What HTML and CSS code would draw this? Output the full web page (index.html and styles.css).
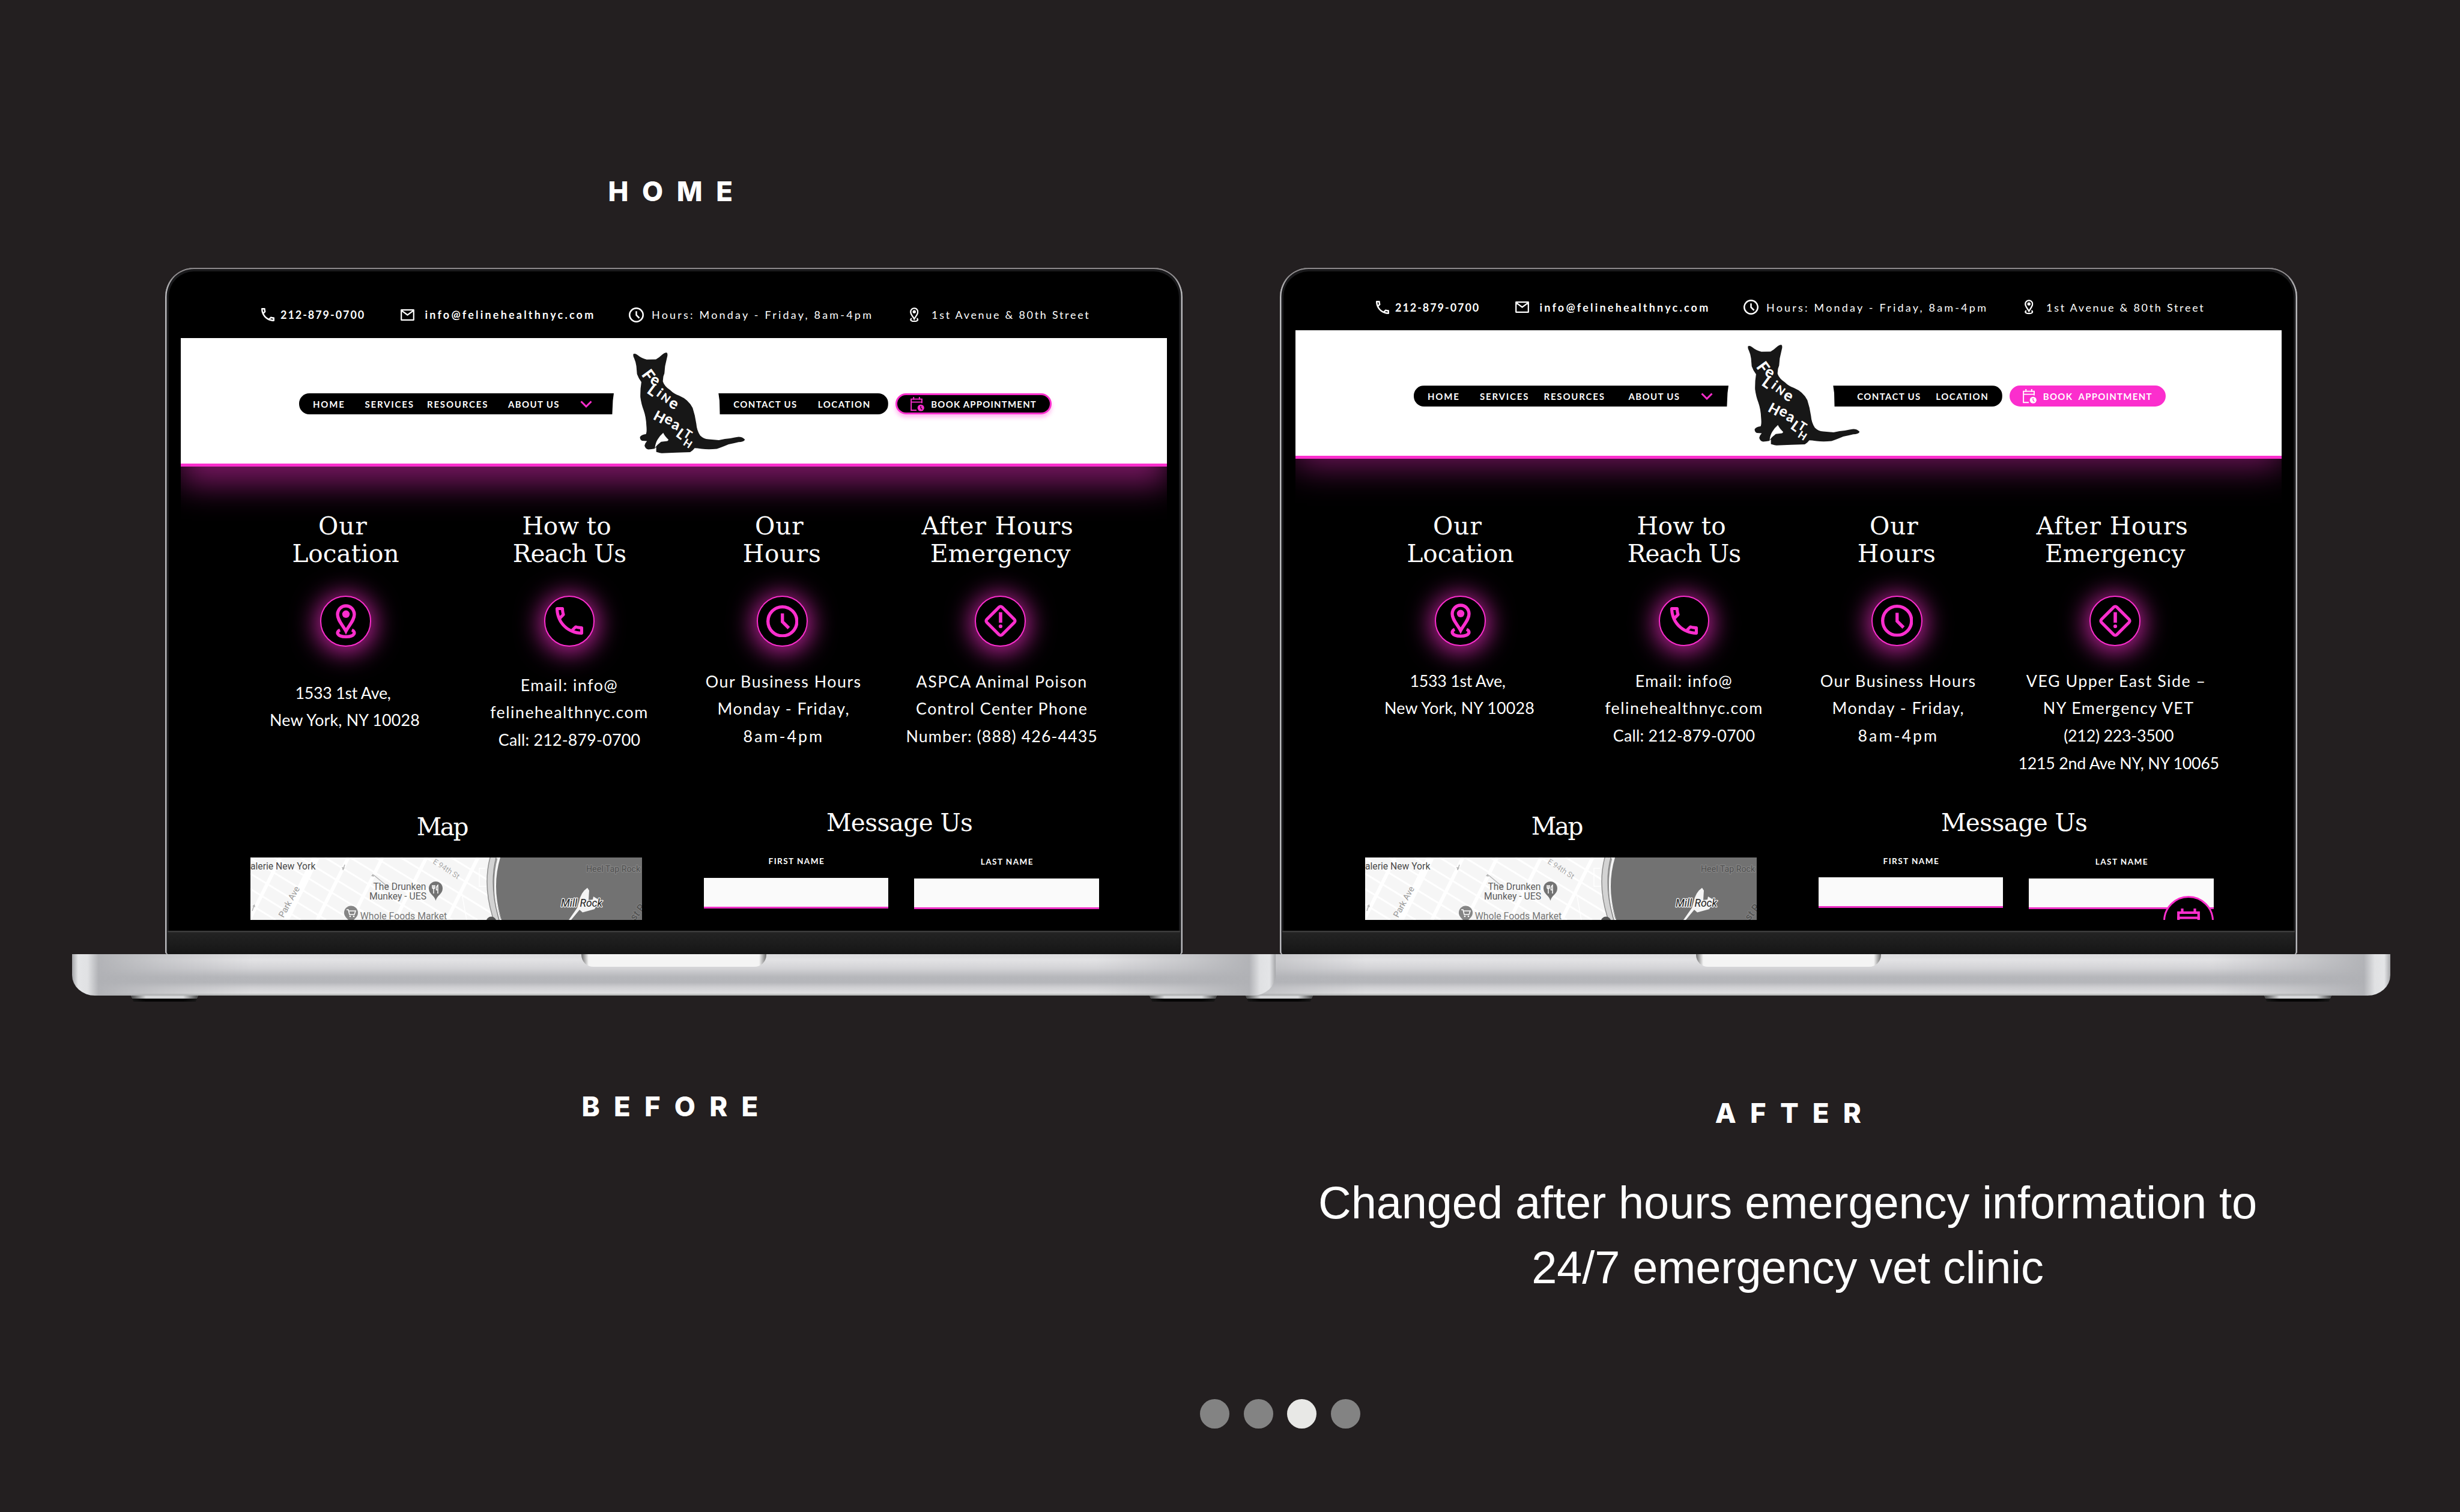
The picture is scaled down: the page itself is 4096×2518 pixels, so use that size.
FILE: index.html
```html
<!DOCTYPE html>
<html lang="en">
<head>
<meta charset="utf-8">
<title>Home – before and after</title>
<link rel="stylesheet" href="styles.css">
</head>
<body>
<svg class="sprite" aria-hidden="true">
  <defs>
  <symbol id="phone" viewBox="3 3 18 18"><path d="M6.54 5c.06.89.21 1.76.45 2.59l-1.2 1.2c-.41-1.2-.67-2.47-.76-3.79h1.51m9.86 12.02c.85.24 1.72.39 2.6.45v1.49c-1.32-.09-2.59-.35-3.8-.75l1.2-1.19M7.5 3H4c-.55 0-1 .45-1 1 0 9.39 7.61 17 17 17 .55 0 1-.45 1-1v-3.49c0-.55-.45-1-1-1-1.24 0-2.45-.2-3.57-.57-.1-.04-.21-.05-.31-.05-.26 0-.51.1-.71.29l-2.2 2.2c-2.83-1.45-5.15-3.76-6.59-6.59l2.2-2.2c.28-.28.36-.67.25-1.02C8.7 6.45 8.5 5.25 8.5 4c0-.55-.45-1-1-1z"/></symbol>
  <symbol id="mail" viewBox="0 0 23 19"><path fill="none" stroke="currentColor" stroke-width="2.2" stroke-linejoin="round" d="M1.2 1.2h20.6v16.6H1.2zM1.5 2.2l10 7.3 10-7.3"/></symbol>
  <symbol id="clock" viewBox="2 2 20 20"><g fill="none" stroke="currentColor" stroke-width="2"><circle cx="12" cy="12" r="9"/><path d="M12 7v5.2l4 4"/></g></symbol>
  <symbol id="pin" viewBox="0 0 34 58"><g fill="none" stroke="currentColor" stroke-width="5.4"><path d="M17 45.5C11.500 35 2.900 27.500 2.900 17.500A14.100 14.500 0 0 1 31.100 17.500C31.100 27.500 22.500 35 17 45.500Z"/><path d="M7 43.500C0 46.500 1.500 54.800 17 54.800S34 46.500 27 43.500"/></g><circle cx="17" cy="17" r="6.3"/></symbol>
  <symbol id="alert" viewBox="0 0 58 58"><rect x="11" y="11" width="36" height="36" rx="3.500" transform="rotate(45 29 29)" fill="none" stroke="currentColor" stroke-width="5.200"/><path d="M26.200 14.500h5.600v17.500h-5.600z"/><circle cx="29" cy="38" r="3.100"/></symbol>
  <symbol id="chevron" viewBox="0 0 20 12"><path d="M1.500 1.500 10 10l8.500-8.500" fill="none" stroke="currentColor" stroke-width="3"/></symbol>
  <symbol id="calendar" viewBox="0 0 24 25"><path d="M5.500 0v5M15.500 0v5M1.200 9h18.600M10.500 23.200H1.200V3.800h18.600V11" fill="none" stroke="currentColor" stroke-width="2"/><circle cx="18" cy="19" r="5.800"/><path class="hand" d="M17.800 15.600v3.600l2.400 2.400" fill="none" stroke-width="1.300"/></symbol>
  <symbol id="cat" viewBox="68 83 670 604"><path fill="#171717" fill-rule="evenodd" d="M70 92Q80 86 94 97Q120 118 150 125L205 124Q225 113 240 98Q258 82 270 84Q278 90 272 112L260 165L256 208Q246 228 247 257Q256 285 290 308Q315 333 345 342Q400 365 425 415Q440 460 447 510Q450 550 470 580Q490 600 520 603L582 608Q620 598 650 597Q680 590 700 588Q725 588 738 605Q732 618 700 620Q670 628 640 633Q600 650 570 660Q520 665 480 660Q450 656 437 656Q425 672 410 680Q330 683 240 686Q215 682 207 678L207 650Q203 652 196 659Q180 662 160 664Q140 658 137 640Q140 625 152 613L122 612Q108 604 110 588Q120 575 145 572Q152 560 148 520Q146 470 132 430Q118 395 112 350Q111 300 118 260Q100 235 92 212L88 165Q85 140 75 118Q67 105 70 92ZM249 564Q256 582 281 606L274 613L236 618Q214 634 199 655Q202 625 215 604Q230 580 249 564Z"/></symbol>
  <symbol id="mapart" viewBox="0 0 652.600 104">
    <rect width="652.600" height="104" fill="#f6f6f6"/>
    <g stroke="#fff" fill="none">
      <path stroke-width="3" d="M-170 0l170 104M-128 0l170 104M-86 0l170 104M-44 0l170 104M-2 0l170 104M40 0l170 104M82 0l170 104M124 0l170 104M166 0l170 104M208 0l170 104M250 0l170 104M292 0l170 104M334 0l170 104"/>
      <path stroke-width="6" d="M50 0L-2 104M163 0l-52 104M220 0l-52 104M293 0l-52 104M379 0l-52 104"/>
      <path stroke-width="12" d="M109 0L58 104"/>
      <path stroke-width="1.500" d="M391 18h-10v30h12M352 60l8 44"/>
    </g>
    <path d="M205 29l24 20M157 12l-3 9M6 80l-3 9" stroke="#b5b5b5" stroke-width="1.500" fill="none"/>
    <path d="M154 21l-2-5 5 1zM204 27l-3 4 5 1zM7 78l-4 3 5 2z" fill="#b5b5b5"/>
    <path d="M416 0Q401 50 418 104H652.600V0Z" fill="#727272"/>
    <path d="M405 0Q392 48 411 104" fill="none" stroke="#8f8f8f" stroke-width="13"/>
    <path d="M405 0Q392 48 411 104" fill="none" stroke="#d3d3d3" stroke-width="10"/>
    <path d="M414 0Q399 50 416 104" fill="none" stroke="#f4f4f4" stroke-width="2"/>
    <path d="M409 0Q397 48 414 104" fill="none" stroke="#777" stroke-width="1.200"/>
    <circle cx="401" cy="107" r="8.500" fill="#555"/>
    <path d="M561 50.500Q550 58 547 74L544 84 530 104h4l14-17 5 4.500 20-5.500 8-15-10-6-1 5-7 1 1-16z" fill="#f4f4f4"/>
    <path d="M308.500 72c-2-9-11.500-11-11.500-20.500a11.500 11.500 0 0 1 23 0c0 9.500-9.500 11.500-11.500 20.500z" fill="#737373"/>
    <path d="M303 46v4q0 2 2 2v8M307 46v4q0 2-2 2M305 46v6M312 60V46q-3 2-2.500 8H312" fill="none" stroke="#fff" stroke-width="1.500"/>
    <path d="M167.500 112c-2-9-11.500-11-11.500-20a11.500 11.500 0 0 1 23 0c0 9-9.500 11-11.500 20z" fill="#868686"/>
    <path d="M160 87h3l2 8h8l2-6h-11" fill="none" stroke="#fff" stroke-width="1.600"/><circle cx="166" cy="98" r="1.300" fill="#fff"/><circle cx="172" cy="98" r="1.300" fill="#fff"/>
  </symbol>
  </defs>
</svg>

<main class="slide">
  <h1 class="tag tag-top">HOME</h1>

  <div class="stage">
    <section class="laptop before">
      <div class="lid">
        <div class="screen">
          <div class="topbar">
            <svg class="i-phone"><use href="#phone"/></svg><b class="t-phone">212-879-0700</b>
            <svg class="i-mail"><use href="#mail"/></svg><b class="t-mail">info@felinehealthnyc.com</b>
            <svg class="i-clock"><use href="#clock"/></svg><span class="t-hours">Hours: Monday - Friday, 8am-4pm</span>
            <svg class="i-pin"><use href="#pin"/></svg><span class="t-street">1st Avenue &amp; 80th Street</span>
          </div>
          <header class="header">
            <nav class="bar bar-left"><a>HOME</a><a>SERVICES</a><a>RESOURCES</a><a class="tight">ABOUT US</a><svg class="i-chev"><use href="#chevron"/></svg></nav>
            <svg class="cat" viewBox="68 83 670 604"><use href="#cat" x="68" y="83" width="670" height="604"/>
              <text class="script"><tspan x="116" y="216" rotate="54" font-size="98">F</tspan><tspan x="164" y="264" rotate="28" font-size="94">e</tspan><tspan x="146" y="322" rotate="36" font-size="92">L</tspan><tspan x="204" y="340" rotate="36" font-size="80">i</tspan><tspan x="230" y="360" rotate="36" font-size="66">N</tspan><tspan x="276" y="404" rotate="28" font-size="94">e</tspan><tspan x="184" y="480" rotate="28" font-size="84">H</tspan><tspan x="250" y="500" rotate="24" font-size="88">e</tspan><tspan x="294" y="534" rotate="22" font-size="88">a</tspan><tspan x="320" y="582" rotate="36" font-size="84">L</tspan><tspan x="364" y="582" rotate="32" font-size="72">T</tspan><tspan x="364" y="634" rotate="32" font-size="62">H</tspan></text></svg>
            <nav class="bar bar-right"><a class="tight">CONTACT US</a><a>LOCATION</a></nav>
            <a class="book"><svg class="i-cal"><use href="#calendar"/></svg><span>BOOK APPOINTMENT</span></a>
          </header>
          <div class="cols">
            <article>
              <h2><span class="lead s1">Our</span><span>Location</span></h2>
              <div class="disc"><svg class="d-pin"><use href="#pin"/></svg></div>
              <p class="n1"><span class="lead d0">1533 1st Ave,</span><span class="d1">New York, NY 10028</span></p>
            </article>
            <article>
              <h2><span class="lead">How to</span><span class="s-1">Reach Us</span></h2>
              <div class="disc"><svg class="d-phone"><use href="#phone"/></svg></div>
              <p class="n2"><span>Email: info@</span><span>felinehealthnyc.com</span><span class="d1">Call: 212-879-0700</span></p>
            </article>
            <article>
              <h2><span class="lead s1">Our</span><span class="s1">Hours</span></h2>
              <div class="disc"><svg class="d-clock"><use href="#clock"/></svg></div>
              <p class="n3"><span>Our Business Hours</span><span>Monday - Friday,</span><span class="d3">8am-4pm</span></p>
            </article>
            <article>
              <h2><span class="lead s1">After Hours</span><span>Emergency</span></h2>
              <div class="disc"><svg class="d-alert"><use href="#alert"/></svg></div>
              <p class="n4"><span>ASPCA Animal Poison</span><span>Control Center Phone</span><span class="d2">Number: (888) 426-4435</span></p>
            </article>
          </div>
          <div class="lower">
            <div class="mapcol">
              <h2 class="s-3">Map</h2>
              <svg class="map" viewBox="0 0 652.600 104"><use href="#mapart" width="652.600" height="104"/>
                <g class="maptext"><text x="0" y="20" fill="#4a4a4a" font-size="15.700">alerie New York</text><text x="204.500" y="54.200" fill="#5c5c5c" font-size="15.700">The Drunken</text><text x="198" y="70" fill="#5c5c5c" font-size="15.700">Munkey - UES</text><text x="182.800" y="102.600" fill="#777" font-size="15.800">Whole Foods Market</text><text transform="translate(55 101) rotate(-61)" fill="#999" font-size="14.500">Park Ave</text><text transform="translate(303 9) rotate(33)" fill="#aaa" font-size="12.500">E 94th St</text><text x="559" y="24" fill="#505050" stroke="#858585" font-size="14.200">Heel Tap Rock</text><text x="517" y="82.300" fill="#222" stroke="#f4f4f4" font-size="17.500" font-style="italic">Mill Rock</text><text transform="translate(640 106) rotate(-52)" fill="#4c4c4c" stroke="#808080" font-size="17">st R</text></g></svg>
            </div>
            <div class="form">
              <h2 class="s-half">Message Us</h2>
              <div class="fields"><label><span>FIRST NAME</span><input></label><label class="second"><span>LAST NAME</span><input></label></div>
            </div>
          </div>
        </div>
        <div class="notch"></div>
        <div class="chin"></div>
      </div>
      <div class="base"><div class="grip"></div></div>
      <div class="feet"><i></i><i></i></div>
    </section>

    <section class="laptop after">
      <div class="lid">
        <div class="screen">
          <div class="topbar">
            <svg class="i-phone"><use href="#phone"/></svg><b class="t-phone">212-879-0700</b>
            <svg class="i-mail"><use href="#mail"/></svg><b class="t-mail">info@felinehealthnyc.com</b>
            <svg class="i-clock"><use href="#clock"/></svg><span class="t-hours">Hours: Monday - Friday, 8am-4pm</span>
            <svg class="i-pin"><use href="#pin"/></svg><span class="t-street">1st Avenue &amp; 80th Street</span>
          </div>
          <header class="header">
            <nav class="bar bar-left"><a>HOME</a><a>SERVICES</a><a>RESOURCES</a><a class="tight">ABOUT US</a><svg class="i-chev"><use href="#chevron"/></svg></nav>
            <svg class="cat" viewBox="68 83 670 604"><use href="#cat" x="68" y="83" width="670" height="604"/>
              <text class="script"><tspan x="116" y="216" rotate="54" font-size="98">F</tspan><tspan x="164" y="264" rotate="28" font-size="94">e</tspan><tspan x="146" y="322" rotate="36" font-size="92">L</tspan><tspan x="204" y="340" rotate="36" font-size="80">i</tspan><tspan x="230" y="360" rotate="36" font-size="66">N</tspan><tspan x="276" y="404" rotate="28" font-size="94">e</tspan><tspan x="184" y="480" rotate="28" font-size="84">H</tspan><tspan x="250" y="500" rotate="24" font-size="88">e</tspan><tspan x="294" y="534" rotate="22" font-size="88">a</tspan><tspan x="320" y="582" rotate="36" font-size="84">L</tspan><tspan x="364" y="582" rotate="32" font-size="72">T</tspan><tspan x="364" y="634" rotate="32" font-size="62">H</tspan></text></svg>
            <nav class="bar bar-right"><a class="tight">CONTACT US</a><a>LOCATION</a></nav>
            <a class="book"><svg class="i-cal"><use href="#calendar"/></svg><span>BOOK&nbsp; APPOINTMENT</span></a>
          </header>
          <div class="cols">
            <article>
              <h2><span class="lead s1">Our</span><span>Location</span></h2>
              <div class="disc"><svg class="d-pin"><use href="#pin"/></svg></div>
              <p class="n1"><span class="lead d0">1533 1st Ave,</span><span class="d1">New York, NY 10028</span></p>
            </article>
            <article>
              <h2><span class="lead">How to</span><span class="s-1">Reach Us</span></h2>
              <div class="disc"><svg class="d-phone"><use href="#phone"/></svg></div>
              <p class="n2"><span>Email: info@</span><span>felinehealthnyc.com</span><span class="d1">Call: 212-879-0700</span></p>
            </article>
            <article>
              <h2><span class="lead s1">Our</span><span class="s1">Hours</span></h2>
              <div class="disc"><svg class="d-clock"><use href="#clock"/></svg></div>
              <p class="n3"><span>Our Business Hours</span><span>Monday - Friday,</span><span class="d3">8am-4pm</span></p>
            </article>
            <article>
              <h2><span class="lead s1">After Hours</span><span>Emergency</span></h2>
              <div class="disc"><svg class="d-alert"><use href="#alert"/></svg></div>
              <p class="n4"><span class="lead">VEG Upper East Side –</span><span>NY Emergency VET</span><span class="d0">(212) 223-3500</span><span class="d0">1215 2nd Ave NY, NY 10065</span></p>
            </article>
          </div>
          <div class="lower">
            <div class="mapcol">
              <h2 class="s-3">Map</h2>
              <svg class="map" viewBox="0 0 652.600 104"><use href="#mapart" width="652.600" height="104"/>
                <g class="maptext"><text x="0" y="20" fill="#4a4a4a" font-size="15.700">alerie New York</text><text x="204.500" y="54.200" fill="#5c5c5c" font-size="15.700">The Drunken</text><text x="198" y="70" fill="#5c5c5c" font-size="15.700">Munkey - UES</text><text x="182.800" y="102.600" fill="#777" font-size="15.800">Whole Foods Market</text><text transform="translate(55 101) rotate(-61)" fill="#999" font-size="14.500">Park Ave</text><text transform="translate(303 9) rotate(33)" fill="#aaa" font-size="12.500">E 94th St</text><text x="559" y="24" fill="#505050" stroke="#858585" font-size="14.200">Heel Tap Rock</text><text x="517" y="82.300" fill="#222" stroke="#f4f4f4" font-size="17.500" font-style="italic">Mill Rock</text><text transform="translate(640 106) rotate(-52)" fill="#4c4c4c" stroke="#808080" font-size="17">st R</text></g></svg>
            </div>
            <div class="form">
              <h2 class="s-half">Message Us</h2>
              <div class="fields"><label><span>FIRST NAME</span><input></label><label class="second"><span>LAST NAME</span><input></label></div>
            </div>
          </div>
          <div class="fab"><svg viewBox="0 0 38 40"><path d="M8.500 0v7M29.500 0v7M2.200 40V6.800h33.600V40M0 15.500h38" fill="none" stroke="currentColor" stroke-width="4.200"/></svg></div>
        </div>
        <div class="notch"></div>
        <div class="chin"></div>
      </div>
      <div class="base"><div class="grip"></div></div>
      <div class="feet"><i></i><i></i></div>
    </section>
  </div>

  <div class="captions">
    <div class="caption cap-before"><h3 class="tag">BEFORE</h3></div>
    <div class="caption cap-after"><h3 class="tag">AFTER</h3><p>Changed after hours emergency information to<br>24/7 emergency vet clinic</p></div>
  </div>

  <div class="dots"><i></i><i></i><i class="on"></i><i></i></div>
</main>
</body>
</html>
```
FILE: styles.css
```css
* { box-sizing: border-box; margin: 0; padding: 0; }
body { background: #231f20; color: #fff; }
svg { display: block; fill: currentColor; flex: none; }
.sprite { position: absolute; width: 0; height: 0; }

.slide { width: 4096px; height: 2518px; display: flex; flex-direction: column; overflow: hidden; }
.tag { font: 800 45.5px/56px Inter, sans-serif; letter-spacing: 23.2px; }
.tag-top { width: 1694px; margin-left: 275px; padding-left: 11px; text-align: center; height: 156px; margin-top: 291px; margin-bottom: -1px; letter-spacing: 22.5px; }

.stage { display: flex; gap: 162px; padding-left: 275px; height: 1222px; }
.laptop { width: 1694px; flex: none; }
.before { position: relative; z-index: 2; }
.lid {
  position: relative; height: 1143px; padding: 49px 26px 0; background: #000;
  border-radius: 48px 48px 4px 4px;
  box-shadow: inset 0 2px 0 #8d898b, inset 2.5px 0 0 #b9b9bc, inset -2.5px 0 0 #b9b9bc, inset 0 0 0 6px #1a1a1c;
}
.screen { position: relative; width: 1642px; height: 1037px; background: #000; overflow: hidden; }
.notch {
  position: absolute; left: 760px; top: 49px; width: 174px; height: 6px;
  border: 1px solid #3a3a3a; border-top: 0; border-radius: 0 0 8px 8px;
}
.chin { position: absolute; left: 4px; right: 4px; bottom: 0; height: 39px; background: linear-gradient(#3c3c3c 0 2px, #232323 3px, #151515); }

.topbar {
  position: relative; z-index: 1; background: #000;
  display: grid; align-items: center; height: 68px; padding: 0 0 10px 133.5px;
  grid-template-columns: 32.5px 199.5px 41px 339px 38.5px 430px 36px auto;
  font: 400 18px/24px Lato, sans-serif; white-space: nowrap;
}
.topbar b { font-weight: 700; }
.i-phone { width: 22px; height: 22px; }
.i-mail { width: 23px; height: 19px; }
.i-clock { width: 25px; height: 25px; }
.i-pin { width: 14.5px; height: 24.5px; }
.t-phone { letter-spacing: 1.95px; }
.t-mail { letter-spacing: 3.2px; }
.t-hours { letter-spacing: 3.2px; }
.t-street { letter-spacing: 2.7px; }

.header {
  display: flex; align-items: center; height: 214px; padding: 10px 0 0 197px;
  background: #fff; border-bottom: 5px solid #fb2ecd;
  box-shadow: 0 30px 50px rgba(251, 46, 205, .47);
}
.bar { display: grid; align-items: center; height: 35px; background: #000; font: 700 15px/20px Lato, sans-serif; letter-spacing: 1.8px; white-space: nowrap; }
.bar-left { width: 524px; border-radius: 17px 0 0 17px; padding-left: 23px; grid-template-columns: 86.5px 103.5px 135px 120px auto; clip-path: polygon(0 0, 100% 0, 99.7% 35%, 99.500% 100%, 0 100%); }
.bar-right { width: 282.500px; margin-left: -43.500px; border-radius: 0 17px 17px 0; padding-left: 25px; grid-template-columns: 140.500px auto; letter-spacing: 1.5px; clip-path: polygon(0 0, 100% 0, 100% 100%, .8% 100%, .6% 35%); }
.tight { letter-spacing: 1.35px; }
.i-chev { width: 20px; height: 12px; color: #fb2ecd; }
.cat { width: 186.300px; height: 168px; margin-left: 31.500px; margin-top: -3px; }
.script { font-family: Lato, sans-serif; font-weight: 900; fill: #fff; }
.book {
  display: flex; align-items: center; width: 259.500px; height: 35px; margin-left: 12.500px; padding-left: 22px;
  border-radius: 17.500px; background: #000; border: 3px solid #fb2ecd; box-shadow: 0 5px 7px rgba(251, 46, 205, .35);
  font: 700 15px/20px Lato, sans-serif; letter-spacing: 1.17px; white-space: nowrap;
}
.i-cal { width: 23px; height: 24px; margin-right: 11px; color: #fb2ecd; }
.i-cal { --hand: #000; }
.hand { stroke: var(--hand); }

.cols { position: relative; display: grid; grid-template-columns: 373px 372px 336.600px 390.200px; padding: 76px 0 0 88px; height: 558px; }
article { display: flex; flex-direction: column; align-items: center; }
h2 { font: 400 40.600px/46px "DejaVu Serif", serif; text-align: center; white-space: nowrap; }
h2 span, p span { display: block; }
h2 .lead { padding-right: 9px; }
.s1 { letter-spacing: 1px; }
.s-1 { letter-spacing: -.9px; }
.s-3 { letter-spacing: -2.500px; }
.s-half { letter-spacing: -.6px; padding-right: 6px; }
.disc {
  display: flex; align-items: center; justify-content: center; width: 84.500px; height: 84.500px; margin-top: 47px;
  border: 2.500px solid #fb2ecd; border-radius: 50%; background: #000; color: #fb2ecd;
  box-shadow: 0 4px 42px 6px rgba(251, 46, 205, .76);
}
.d-pin { width: 34px; height: 57.500px; }
.d-phone { width: 46px; height: 46px; }
.d-clock { width: 53.500px; height: 53.500px; }
.d-alert { width: 58px; height: 58px; }
.cols p { font: 400 26.800px/45.800px Lato, sans-serif; letter-spacing: 1.5px; text-align: center; white-space: nowrap; margin-top: 36px; }
.cols .n1 { margin-top: 55px; }
.cols .n2 { margin-top: 42.200px; }
.n1 { padding-right: 3px; }
.n1 .lead { padding-right: 6px; }
.n3, .n4 { padding-left: 5px; }
.cols .d0 { letter-spacing: -.25px; }
.cols .d1 { letter-spacing: .2px; }
.cols .d2 { letter-spacing: 1.05px; }
.cols .d3 { letter-spacing: 3px; }

.lower { display: flex; padding-left: 115.500px; }
.mapcol { width: 652.600px; padding-top: 18.500px; }
.mapcol h2 { padding-right: 14px; margin-bottom: 28.500px; }
.map { width: 652.600px; height: 104px; }
.maptext { font-family: Roboto, sans-serif; font-weight: 400; }
.maptext text { paint-order: stroke; stroke-width: 2.500px; stroke-linejoin: round; }
.form { width: 658px; margin-left: 102.500px; padding-top: 12px; }
.fields { display: flex; gap: 43px; margin-top: 31px; }
label { width: 307.500px; text-align: center; font: 700 13.600px/20px Lato, sans-serif; letter-spacing: 1.400px; }
label span { display: block; padding-left: 2px; }
.second { padding-top: 1.200px; }
input { display: block; width: 100%; height: 51px; margin-top: 17.500px; background: #fafafa; border: 0; border-bottom: 3px solid #ee2fc6; }

.after .topbar { height: 55.300px; padding-bottom: 22px; }
.after .header { box-shadow: 0 12px 54px rgba(251, 46, 205, .46); }
.after .bar-left { grid-template-columns: 87px 106.500px 141px 120px auto; }
.after .bar-right { width: 281.500px; padding-left: 40px; grid-template-columns: 131px auto; }
.after .book { background: #fb2ecd; box-shadow: none; padding-left: 18.500px; letter-spacing: 1.250px; }
.after .i-cal { color: #fff; --hand: #fb2ecd; }
.after .cols { padding-top: 88.700px; height: 570.700px; }
.after .cols p { margin-top: 35.200px; }
.after .n4 { padding-left: 12px; }
.after .n4 .lead { padding-right: 8px; }
.fab {
  position: absolute; left: 1444.500px; top: 997px; width: 84.500px; height: 84.500px;
  border: 3px solid #fb2ecd; border-radius: 50%; background: #000; color: #fb2ecd;
}
.fab svg { width: 38px; height: 40px; margin: 17.500px auto 0; }

.base {
  height: 68.500px; margin: 0 -155px; border-radius: 0 0 38px 38px / 0 0 34px 34px;
  background:
    linear-gradient(90deg, #a5a6a9 0, #e4e5e7 10px, #e0e1e3 26px, rgba(176, 177, 181, .95) 44px, rgba(176, 177, 181, .5) 150px, rgba(176, 177, 181, 0) 300px) left / 300px 100% no-repeat,
    linear-gradient(-90deg, #a5a6a9 0, #e4e5e7 10px, #e0e1e3 26px, rgba(176, 177, 181, .95) 44px, rgba(176, 177, 181, .5) 150px, rgba(176, 177, 181, 0) 300px) right / 300px 100% no-repeat,
    linear-gradient(#dcdcde 0, #e2e2e4 14%, #d3d3d6 34%, #b6b7bb 55%, #b5b6ba 68%, #cfcfd2 80%, #e0e0e1 94%, #a4a8a6 100%);
}
.grip {
  width: 308px; height: 21px; margin: 0 auto; border-radius: 0 0 20px 20px;
  background: linear-gradient(90deg, #6f6f6f, #f4f4f4 12px, #f4f4f4 296px, #6f6f6f);
}
.feet { display: flex; justify-content: space-between; margin: 0 -57px; }
.feet i {
  width: 112px; height: 10.500px; clip-path: polygon(0 0, 100% 0, 96% 100%, 4% 100%);
  background: linear-gradient(90deg, rgba(30, 30, 30, .8), transparent 25px, transparent 87px, rgba(30, 30, 30, .8)), linear-gradient(#d5d6d8 0 5px, #050505 5.500px);
}

.captions { display: flex; gap: 162px; padding-left: 275px; }
.caption { width: 1694px; text-align: center; }
.cap-before { padding-top: 147px; }
.cap-after { padding-top: 158px; }
.cap-before .tag { padding-left: 10px; }
.cap-after .tag { padding-left: 22px; }
.caption p { margin-top: 66.500px; font: 400 75.800px/108.800px "Liberation Sans", Arial, sans-serif; letter-spacing: -.1px; padding-right: 3px; }

.dots { display: flex; gap: 23.500px; margin: auto 0 139.500px 1998px; }
.dots i { width: 49px; height: 49px; border-radius: 50%; background: #838383; }
.dots .on { background: #e8e8e6; }
```
